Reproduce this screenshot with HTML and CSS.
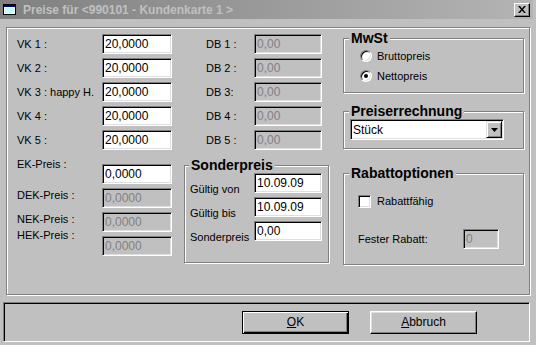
FILE: index.html
```html
<!DOCTYPE html>
<html lang="de">
<head>
  <meta charset="UTF-8">
  <title>Preise für &lt;990101 - Kundenkarte 1 &gt;</title>
  <link rel="stylesheet" href="styles.css">
</head>
<body>
  <div class="window">
    <div class="titlebar">
      <svg class="app-icon" width="13" height="11" viewBox="0 0 13 11">
        <rect x="0.5" y="0.5" width="12" height="10" fill="#fff" stroke="#000"/>
        <rect x="1" y="1" width="11" height="2" fill="#000080"/>
        <rect x="2" y="4" width="9" height="5" fill="#c0ffff"/>
      </svg>
      <span class="caption">Preise für &lt;990101 - Kundenkarte 1 &gt;</span>
      <button class="close-btn">
        <svg width="8" height="7" viewBox="0 0 8 7"><path d="M0 0h2l2 2.5L6 0h2L5 3.5 8 7H6L4 4.5 2 7H0l3-3.5z" fill="#000"/></svg>
      </button>
    </div>

    <div class="panel">
      <!-- Verkaufspreise / Einkaufspreise -->
      <div class="col col-prices">
        <div class="row"><span class="lbl">VK 1 :</span><span class="field w70">20,0000</span></div>
        <div class="row"><span class="lbl">VK 2 :</span><span class="field w70">20,0000</span></div>
        <div class="row"><span class="lbl">VK 3 : happy H.</span><span class="field w70">20,0000</span></div>
        <div class="row"><span class="lbl">VK 4 :</span><span class="field w70">20,0000</span></div>
        <div class="row"><span class="lbl">VK 5 :</span><span class="field w70">20,0000</span></div>

        <div class="ek-block">
          <div class="row"><span class="lbl up-10">EK-Preis :</span><span class="field w70">0,0000</span></div>
          <div class="row"><span class="lbl up-3">DEK-Preis :</span><span class="field w70 disabled">0,0000</span></div>
          <div class="row"><span class="lbl up-3">NEK-Preis :</span><span class="field w70 disabled">0,0000</span></div>
          <div class="row"><span class="lbl up-11">HEK-Preis :</span><span class="field w70 disabled">0,0000</span></div>
        </div>
      </div>

      <!-- Deckungsbeitraege / Sonderpreis -->
      <div class="col col-db">
        <div class="row"><span class="lbl db-lbl">DB 1 :</span><span class="field w68 disabled">0,00</span></div>
        <div class="row"><span class="lbl db-lbl">DB 2 :</span><span class="field w68 disabled">0,00</span></div>
        <div class="row"><span class="lbl db-lbl">DB 3:</span><span class="field w68 disabled">0,00</span></div>
        <div class="row"><span class="lbl db-lbl">DB 4 :</span><span class="field w68 disabled">0,00</span></div>
        <div class="row"><span class="lbl db-lbl">DB 5 :</span><span class="field w68 disabled">0,00</span></div>

        <div class="group group-sonder">
          <div class="group-title">Sonderpreis</div>
          <div class="row"><span class="lbl sp-lbl down">Gültig von</span><span class="field w68">10.09.09</span></div>
          <div class="row"><span class="lbl sp-lbl down">Gültig bis</span><span class="field w68">10.09.09</span></div>
          <div class="row"><span class="lbl sp-lbl down">Sonderpreis</span><span class="field w68">0,00</span></div>
        </div>
      </div>

      <!-- Optionen -->
      <div class="col col-options">
        <div class="group group-mwst">
          <div class="group-title">MwSt</div>
          <div class="option"><span class="radio"></span>Bruttopreis</div>
          <div class="option"><span class="radio checked"></span>Nettopreis</div>
        </div>

        <div class="group group-calc">
          <div class="group-title">Preiserrechnung</div>
          <div class="combo">
            <span class="combo-text">Stück</span>
            <span class="combo-btn">
              <svg width="7" height="4" viewBox="0 0 7 4"><path d="M0 0h7L3.5 4z" fill="#000"/></svg>
            </span>
          </div>
        </div>

        <div class="group group-rabatt">
          <div class="group-title">Rabattoptionen</div>
          <div class="option check-row"><span class="checkbox"></span>Rabattfähig</div>
          <div class="row fix-row"><span class="lbl fix-lbl">Fester Rabatt:</span><span class="field w36 disabled">0</span></div>
        </div>
      </div>
    </div>

    <div class="footer">
      <button class="btn default"><u>O</u>K</button>
      <button class="btn"><u>A</u>bbruch</button>
    </div>
  </div>
</body>
</html>
```

FILE: styles.css
```css
body {
  margin: 0;
  background: #c0c0c0;
  font-family: 'Liberation Sans', Arial, sans-serif;
  font-size: 11px;
  color: #000;
}

.window {
  width: 536px;
  height: 345px;
  overflow: hidden;
}

/* Title bar */
.titlebar {
  width: 533px;
  height: 19px;
  display: flex;
  align-items: center;
  background: linear-gradient(to right, #808080, #b4b4b4);
}

.app-icon {
  margin-left: 3px;
  margin-right: 7px;
}

.caption {
  color: #c0c0c0;
  font-weight: bold;
  font-size: 12px;
}

.close-btn {
  margin-left: auto;
  margin-right: 3px;
  width: 16px;
  height: 14px;
  padding: 0;
  display: flex;
  align-items: center;
  justify-content: center;
  background: #c0c0c0;
  border: 1px solid;
  border-color: #fff #000 #000 #fff;
  box-shadow: inset -1px -1px #808080;
}

/* Main panel */
.panel {
  box-sizing: border-box;
  width: 524px;
  height: 268px;
  margin: 8px 0 0 6px;
  border: 1px solid #808080;
  box-shadow: inset 1px 1px #fff, 1px 1px #fff;
  display: flex;
  padding-left: 10px;
}

.col {
  display: flex;
  flex-direction: column;
}

.col-prices {
  width: 155px;
  padding-top: 6px;
}

.col-db {
  width: 146px;
  margin-left: 12px;
  padding-top: 6px;
}

.col-options {
  width: 181px;
  margin-left: 13px;
  padding-top: 10px;
}

.row {
  display: flex;
  align-items: center;
  height: 20px;
  margin-bottom: 4px;
}

.lbl {
  width: 85px;
  white-space: nowrap;
}

.up-3 { margin-bottom: 6px; }
.up-10 { margin-bottom: 20px; }
.up-11 { margin-bottom: 22px; }

.ek-block {
  margin-top: 10px;
}

.db-lbl {
  box-sizing: border-box;
  width: 70px;
  padding-left: 22px;
}

/* Edit fields */
.field {
  box-sizing: border-box;
  height: 20px;
  padding: 2px 0 0 2px;
  background: #fff;
  border: 1px solid;
  border-color: #808080 #fff #fff #808080;
  box-shadow: inset 1px 1px #000, inset -1px -1px #dfdfdf;
  font-size: 12px;
  line-height: 15px;
  white-space: nowrap;
  overflow: hidden;
}

.field.disabled {
  background: #c0c0c0;
  color: #808080;
}

.w70 { width: 70px; }
.w68 { width: 68px; }
.w36 { width: 36px; }

/* Group boxes */
.group {
  box-sizing: border-box;
  border: 1px solid #808080;
  box-shadow: inset 1px 1px #fff, 1px 1px #fff;
}

.group-title {
  width: fit-content;
  margin: -9px 0 0 5px;
  padding: 0 2px;
  background: #c0c0c0;
  font-size: 14px;
  font-weight: bold;
  line-height: 16px;
}

.group-sonder {
  width: 145px;
  height: 98px;
  margin-top: 11px;
}

.group-sonder .group-title {
  margin-left: 4px;
}

.sp-lbl {
  box-sizing: border-box;
  width: 69px;
  padding-left: 5px;
}

.down {
  margin-top: 12px;
}

.group-mwst {
  height: 55px;
}

.option {
  display: flex;
  align-items: center;
  height: 20px;
  padding-left: 16px;
}

.radio {
  box-sizing: border-box;
  width: 12px;
  height: 12px;
  margin-right: 5px;
  border-radius: 50%;
  background: #fff;
  border: 1px solid;
  border-color: #808080 #fff #fff #808080;
  box-shadow: inset 1px 1px #000, inset -1px -1px #dfdfdf;
  display: flex;
  align-items: center;
  justify-content: center;
}

.radio.checked::after {
  content: "";
  width: 4px;
  height: 4px;
  border-radius: 50%;
  background: #000;
}

.group-calc {
  height: 38px;
  margin-top: 18px;
}

.combo {
  box-sizing: border-box;
  width: 154px;
  height: 21px;
  margin-left: 6px;
  display: flex;
  align-items: center;
  background: #fff;
  border: 1px solid;
  border-color: #808080 #fff #fff #808080;
  box-shadow: inset 1px 1px #000, inset -1px -1px #dfdfdf;
  font-size: 12px;
}

.combo-text {
  padding-left: 2px;
}

.combo-btn {
  box-sizing: border-box;
  margin-left: auto;
  margin-right: 1px;
  width: 16px;
  height: 17px;
  display: flex;
  align-items: center;
  justify-content: center;
  background: #c0c0c0;
  border: 1px solid;
  border-color: #dfdfdf #000 #000 #dfdfdf;
  box-shadow: inset 1px 1px #fff, inset -1px -1px #808080;
}

.group-rabatt {
  height: 92px;
  margin-top: 24px;
}

.check-row {
  margin-top: 10px;
  padding-left: 14px;
}

.checkbox {
  box-sizing: border-box;
  width: 13px;
  height: 13px;
  margin-right: 6px;
  background: #fff;
  border: 1px solid;
  border-color: #808080 #fff #fff #808080;
  box-shadow: inset 1px 1px #000, inset -1px -1px #dfdfdf;
}

.fix-row {
  margin-top: 18px;
  padding-left: 14px;
}

.fix-lbl {
  width: 105px;
}

/* Button bar */
.footer {
  box-sizing: border-box;
  width: 527px;
  height: 40px;
  margin: 7px 0 0 3px;
  border: 1px solid;
  border-color: #808080 #fff #fff #808080;
  box-shadow: inset 1px 1px #000;
  display: flex;
  align-items: center;
  padding-left: 238px;
  gap: 21px;
}

.btn {
  box-sizing: border-box;
  width: 107px;
  height: 23px;
  padding: 0;
  background: #c0c0c0;
  font-family: 'Liberation Sans', Arial, sans-serif;
  font-size: 12px;
  color: #000;
  border: 1px solid;
  border-color: #fff #000 #000 #fff;
  box-shadow: inset -1px -1px #808080, inset 1px 1px #dfdfdf;
}

.btn.default {
  border: 1px solid #000;
  box-shadow: inset 1px 1px #fff, inset -1px -1px #000, inset -2px -2px #808080;
}
```
